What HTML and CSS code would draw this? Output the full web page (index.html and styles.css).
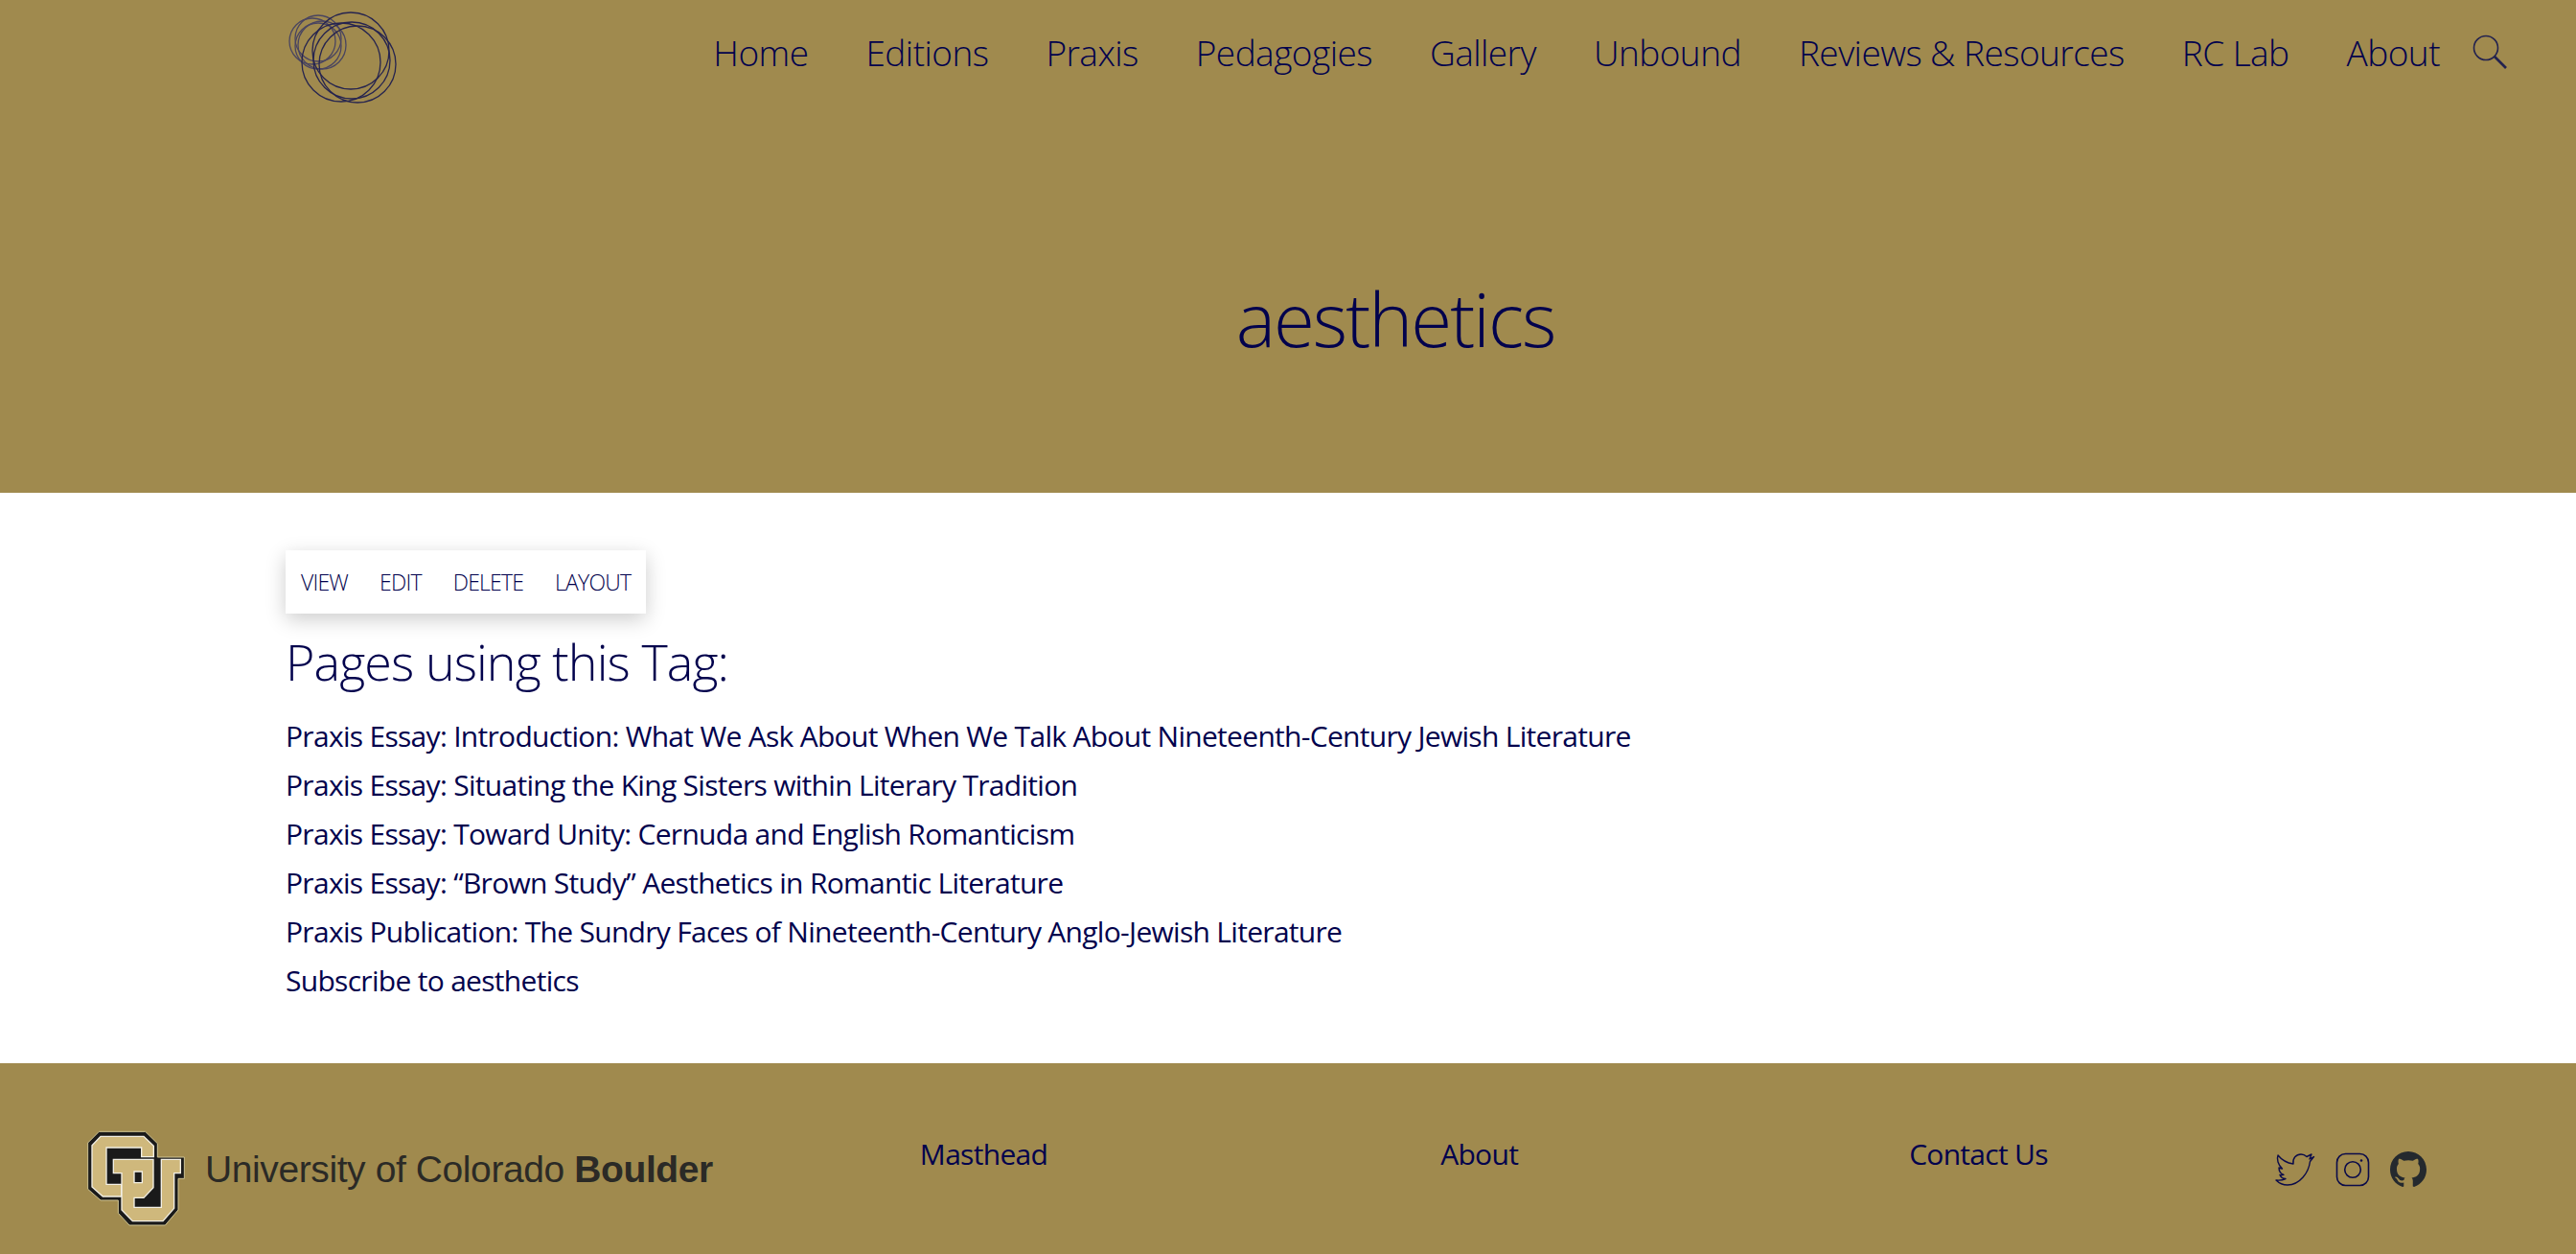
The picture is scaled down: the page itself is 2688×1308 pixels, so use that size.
FILE: index.html
```html
<!DOCTYPE html>
<html lang="en">
<head>
<meta charset="UTF-8">
<title>aesthetics</title>
<link rel="stylesheet" href="styles.css">
</head>
<body>
<header class="site-header">
    <div class="topbar">
        <a class="site-logo" href="#">
            <svg width="124" height="100" viewBox="296 10 124 100" fill="none" stroke-width="1.3">
                <g stroke="#4a4560">
                    <circle cx="326" cy="43" r="24"/>
                    <circle cx="332" cy="40" r="24"/>
                    <circle cx="336" cy="47" r="25"/>
                    <circle cx="332" cy="48" r="24"/>
                </g>
                <g stroke="#26244f">
                    <circle cx="366" cy="53" r="40"/>
                    <circle cx="356" cy="65" r="41"/>
                    <circle cx="367" cy="63" r="40"/>
                    <circle cx="373" cy="67" r="40"/>
                </g>
            </svg>
        </a>
        <nav class="main-nav">
            <a href="#">Home</a>
            <a href="#">Editions</a>
            <a href="#">Praxis</a>
            <a href="#">Pedagogies</a>
            <a href="#">Gallery</a>
            <a href="#">Unbound</a>
            <a href="#">Reviews &amp; Resources</a>
            <a href="#">RC Lab</a>
            <a href="#">About</a>
            <svg class="search-icon" width="36" height="36" viewBox="0 0 36 36" fill="none" stroke="#23224f">
                <circle cx="14" cy="14" r="12.5" stroke-width="1.6"/>
                <path d="M23 23l12 12" stroke-width="2.6"/>
            </svg>
        </nav>
    </div>
    <h1 class="page-title">aesthetics</h1>
</header>

<main class="content">
    <ul class="tabs">
        <li><a href="#">View</a></li>
        <li><a href="#">Edit</a></li>
        <li><a href="#">Delete</a></li>
        <li><a href="#">Layout</a></li>
    </ul>
    <h2 class="section-title">Pages using this Tag:</h2>
    <ul class="page-list">
        <li><a href="#">Praxis Essay: Introduction: What We Ask About When We Talk About Nineteenth-Century Jewish Literature</a></li>
        <li><a href="#">Praxis Essay: Situating the King Sisters within Literary Tradition</a></li>
        <li><a href="#">Praxis Essay: Toward Unity: Cernuda and English Romanticism</a></li>
        <li><a href="#">Praxis Essay: “Brown Study” Aesthetics in Romantic Literature</a></li>
        <li><a href="#">Praxis Publication: The Sundry Faces of Nineteenth-Century Anglo-Jewish Literature</a></li>
        <li><a href="#">Subscribe to aesthetics</a></li>
    </ul>
</main>

<footer class="site-footer">
    <a class="cu-logo" href="#">
        <svg class="cu-mark" width="115" height="112" viewBox="0 0 345 336">
            <path fill="#1a1a1a" stroke="#cfc493" stroke-width="3" stroke-linejoin="round" d="M55 25H200L238 62V105H322V172H303V270L262 318H150L115 280V240H60L20 205V60Z"/>
            <g fill="#cfb87c" stroke="#f2efe4" stroke-width="4">
                <path d="M60 40H195L226 70V104H188V75H78V190H125V228H67L33 198V68Z"/>
                <path fill-rule="evenodd" d="M100 112H225V200L195 232H165V262H250V112H310V155H290V265L255 305H160L126 270V155H100ZM165 150H190V185H165Z"/>
            </g>
        </svg>
        <span class="cu-name">University of Colorado <b>Boulder</b></span>
    </a>
    <a class="footer-link masthead" href="#">Masthead</a>
    <a class="footer-link about" href="#">About</a>
    <a class="footer-link contact" href="#">Contact Us</a>
    <div class="social">
        <svg width="42" height="34" viewBox="0 0 42 34" fill="none" stroke="#0b0b4a" stroke-width="1.4" stroke-linejoin="round">
            <path d="M3 2c4 5 9 8 16 9C18 5 22 1 27 1c2.500 0 4.500 1 6 2.500l5-2.500-2 5 4.500-2.500-4 5C35 20 26 33 13 33 8 33 4 31 1 28c4 .5 7 0 10-1.500-3 0-5-1.500-6-4 1 .3 2.500.3 4-.2-3-1-5-3.800-5-7.300 1 .5 2.500 1 3.500 1C3 12 1.500 6 3 2z"/>
        </svg>
        <svg width="36" height="36" viewBox="0 0 36 36" fill="none" stroke="#0b0b4a" stroke-width="1.6">
            <rect x="1.500" y="1.500" width="33" height="33" rx="9"/>
            <circle cx="18" cy="18" r="8.300"/>
            <circle cx="27" cy="8.500" r="1.300" fill="#0b0b4a" stroke="none"/>
        </svg>
        <svg width="38" height="38" viewBox="0 0 16 16" fill="#24292e">
            <path d="M8 0C3.580 0 0 3.580 0 8c0 3.540 2.290 6.530 5.470 7.590.4.070.55-.17.55-.38 0-.19-.01-.82-.01-1.490-2.010.37-2.530-.49-2.690-.94-.09-.23-.48-.94-.82-1.130-.28-.15-.68-.52-.01-.53.630-.01 1.080.58 1.230.82.720 1.210 1.870.87 2.330.66.070-.52.280-.87.510-1.070-1.780-.2-3.640-.89-3.640-3.950 0-.87.310-1.590.820-2.150-.08-.2-.36-1.020.08-2.120 0 0 .67-.21 2.200.82.640-.18 1.320-.27 2-.27s1.360.09 2 .27c1.530-1.040 2.200-.82 2.200-.82.440 1.100.160 1.920.08 2.120.51.560.82 1.270.82 2.150 0 3.070-1.870 3.750-3.650 3.950.29.250.54.730.54 1.480 0 1.070-.01 1.930-.01 2.200 0 .21.15.46.550.38A8.010 8.010 0 0 0 16 8c0-4.420-3.580-8-8-8z"/>
        </svg>
    </div>
</footer>
</body>
</html>
```

FILE: styles.css
```css
* {
    box-sizing: border-box;
}
body {
    margin: 0;
    font-family: "Open Sans", "Noto Sans", sans-serif;
    color: #02024d;
    background-color: #fff;
}
a {
    color: inherit;
    text-decoration: none;
}
ul {
    list-style: none;
    margin: 0;
    padding: 0;
}

.site-header {
    height: 514px;
    background-color: #a08a4e;
    padding: 10px 72px 0 296px;
}
.topbar {
    display: flex;
    justify-content: space-between;
}
.main-nav {
    display: flex;
    align-items: flex-start;
    gap: 60px;
    font-size: 37px;
    font-weight: 300;
    letter-spacing: -0.55px;
    line-height: 50px;
    padding-top: 20px;
}
.search-icon {
    margin: 6px 0 0 -26px;
}
.page-title {
    margin: 167px 0 0;
    text-align: center;
    font-size: 78px;
    font-weight: 300;
    letter-spacing: -2px;
    line-height: 100px;
}

.content {
    height: 595px;
    padding: 60px 0 0 298px;
}
.tabs {
    display: inline-flex;
    gap: 33px;
    height: 66px;
    align-items: center;
    padding: 0 16px;
    background-color: #fff;
    box-shadow: 0 6px 20px rgba(0, 0, 0, 0.2);
    font-size: 23px;
    font-weight: 300;
    letter-spacing: -0.8px;
    text-transform: uppercase;
}
.section-title {
    margin: 15px 0 17px;
    font-size: 52px;
    font-weight: 300;
    letter-spacing: -0.9px;
    line-height: 70px;
}
.page-list {
    font-size: 30px;
    letter-spacing: -0.7px;
    line-height: 51px;
}

.site-footer {
    height: 199px;
    background-color: #a08a4e;
    display: flex;
    padding: 63px 0 0 85px;
}
.cu-logo {
    display: flex;
    align-items: center;
    gap: 14px;
    height: 112px;
}
.cu-name {
    font-family: "Liberation Sans", Arial, sans-serif;
    font-size: 39px;
    letter-spacing: -0.4px;
    color: #2b2a26;
    padding-bottom: 16px;
}
.footer-link {
    font-size: 30px;
    letter-spacing: -0.7px;
    line-height: 40px;
    margin-top: 12px;
}
.masthead {
    margin-left: 216px;
}
.about {
    margin-left: 410px;
}
.contact {
    margin-left: 408px;
}
.social {
    display: flex;
    align-items: center;
    gap: 21px;
    height: 38px;
    margin: 29px 0 0 237px;
}
```
